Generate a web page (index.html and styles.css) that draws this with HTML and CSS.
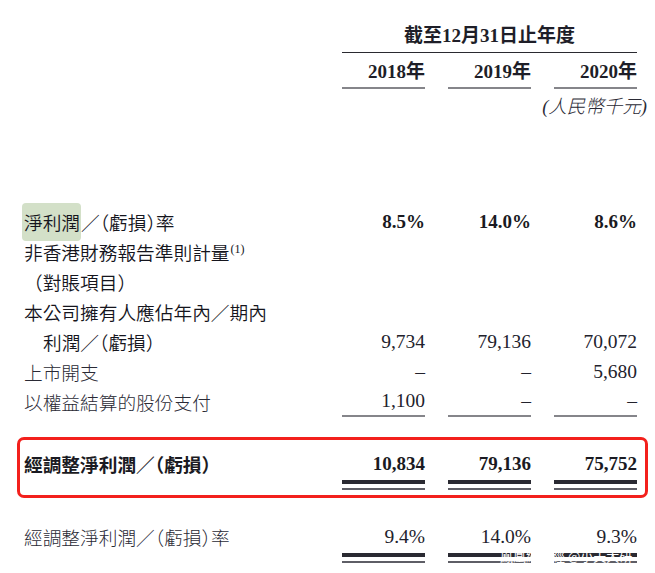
FILE: index.html
```html
<!DOCTYPE html>
<html lang="zh-Hant">
<head>
<meta charset="utf-8">
<title>經調整淨利潤</title>
<link rel="stylesheet" href="styles.css">
</head>
<body>
<div class="page">
  <div class="row head-row">
    <div></div>
    <div class="period">截至12月31日止年度</div>
  </div>
  <div class="row years-row">
    <div></div>
    <div class="year">2018年</div>
    <div class="year">2019年</div>
    <div class="year">2020年</div>
  </div>
  <div class="row unit-row">
    <div></div>
    <div class="unit">(人民幣千元)</div>
  </div>

  <div class="rows">
    <div class="row line">
      <div class="label strong"><span class="hl">淨利潤</span>／<span class="hp">（</span>虧損<span class="hp">）</span>率</div>
      <div class="num bold">8.5%</div>
      <div class="num bold">14.0%</div>
      <div class="num bold">8.6%</div>
    </div>
    <div class="row line">
      <div class="label strong">非香港財務報告準則計量<sup class="note">(1)</sup></div>
      <div></div><div></div><div></div>
    </div>
    <div class="row line">
      <div class="label strong">（對賬項目）</div>
      <div></div><div></div><div></div>
    </div>
    <div class="row line">
      <div class="label strong">本公司擁有人應佔年內／期內</div>
      <div></div><div></div><div></div>
    </div>
    <div class="row line">
      <div class="label strong indent">利潤／<span class="hp">（</span>虧損<span class="hp">）</span></div>
      <div class="num">9,734</div>
      <div class="num">79,136</div>
      <div class="num">70,072</div>
    </div>
    <div class="row line">
      <div class="label">上市開支</div>
      <div class="num">–</div>
      <div class="num">–</div>
      <div class="num">5,680</div>
    </div>
    <div class="row line last">
      <div class="label">以權益結算的股份支付</div>
      <div class="num sub">1,100</div>
      <div class="num sub">–</div>
      <div class="num sub">–</div>
    </div>
  </div>

  <div class="redbox">
    <div class="row line boxed">
      <div class="label heavy">經調整淨利潤／<span class="hp">（</span>虧損<span class="hp">）</span></div>
      <div class="num bold">10,834</div>
      <div class="num bold">79,136</div>
      <div class="num bold">75,752</div>
    </div>
    <div class="row boxed">
      <div></div>
      <div class="dbl"></div>
      <div class="dbl"></div>
      <div class="dbl"></div>
    </div>
  </div>

  <div class="row line final">
    <div class="label">經調整淨利潤／<span class="hp">（</span>虧損<span class="hp">）</span>率</div>
    <div class="num">9.4%</div>
    <div class="num">14.0%</div>
    <div class="num">9.3%</div>
  </div>
  <div class="row">
    <div></div>
    <div class="dbl"></div>
    <div class="dbl"></div>
    <div class="dbl"></div>
  </div>

  <div class="watermark">鳳凰網財經 @小夫大研</div>
</div>
</body>
</html>
```

FILE: styles.css
```css
* { box-sizing: border-box; }

html, body {
  margin: 0;
  padding: 0;
  background: #ffffff;
}

body {
  color: #1e1e28;
  font-family: "Noto Sans CJK TC", "Noto Sans CJK SC", sans-serif;
}

.page {
  position: relative;
  width: 655px;
  height: 573px;
  padding-top: 22px;
  overflow: hidden;
}

.row {
  display: grid;
  grid-template-columns: 1fr 83px 83px 83px;
  column-gap: 23px;
  padding: 0 18px 0 24px;
}

.period {
  grid-column: 2 / 5;
  text-align: center;
  font-family: "Liberation Serif", "Noto Sans CJK TC", serif;
  font-weight: 700;
  font-size: 19px;
  line-height: 28px;
  padding-bottom: 2px;
  border-bottom: 1px solid #2a2a30;
}

.year {
  text-align: right;
  font-family: "Liberation Serif", "Noto Sans CJK TC", serif;
  font-weight: 700;
  font-size: 19px;
  line-height: 26px;
  padding-top: 6px;
  padding-bottom: 2px;
  border-bottom: 2px solid #85858a;
}

.unit {
  grid-column: 2 / 5;
  text-align: right;
  font-family: "Liberation Serif", "Noto Sans CJK TC", serif;
  font-style: italic;
  font-weight: 300;
  font-size: 18.5px;
  line-height: 26px;
  margin-top: 5px;
  margin-right: -10px;
  color: #2a2a35;
}

.rows {
  margin-top: 87px;
}

.line {
  line-height: 30px;
  height: 30px;
}

.label {
  font-size: 18.7px;
  white-space: nowrap;
  font-weight: 300;
  color: #2a2a35;
}

.label.strong {
  font-weight: 350;
  color: #15151d;
}

.label.heavy {
  font-weight: 700;
  color: #1a1a22;
}

.indent {
  padding-left: 19px;
}

.hp {
  font-feature-settings: "halt" 1;
}

.hl {
  background: #d3e0c8;
  border-radius: 4px;
  padding: 5px 1px 6px 2px;
  margin-left: -2px;
}

.note {
  font-family: "Liberation Serif", serif;
  font-size: 12px;
  vertical-align: 7px;
  line-height: 0;
  margin-left: 1px;
}

.num {
  text-align: right;
  font-family: "Liberation Serif", serif;
  font-size: 19.5px;
  color: #22222c;
}

.num.bold {
  font-weight: 700;
  font-size: 19px;
  color: #1a1a22;
}

.last .num.sub {
  line-height: 28px;
  height: 30px;
  border-bottom: 2px solid #85858a;
}

.redbox {
  margin: 20px 7px 0 17px;
  border: 3px solid #f3201c;
  border-radius: 7px;
  padding: 9px 0 5px 0;
}

.row.boxed {
  padding: 0 8px 0 4px;
}

.dbl {
  margin-top: 1px;
  height: 10px;
  border-top: 4px solid #2a2a32;
  border-bottom: 2px solid #5e5e66;
}

.final {
  margin-top: 24px;
}

.watermark {
  position: absolute;
  left: 500px;
  top: 549px;
  font-size: 13px;
  line-height: 13px;
  color: #ffffff;
  white-space: nowrap;
}
```
